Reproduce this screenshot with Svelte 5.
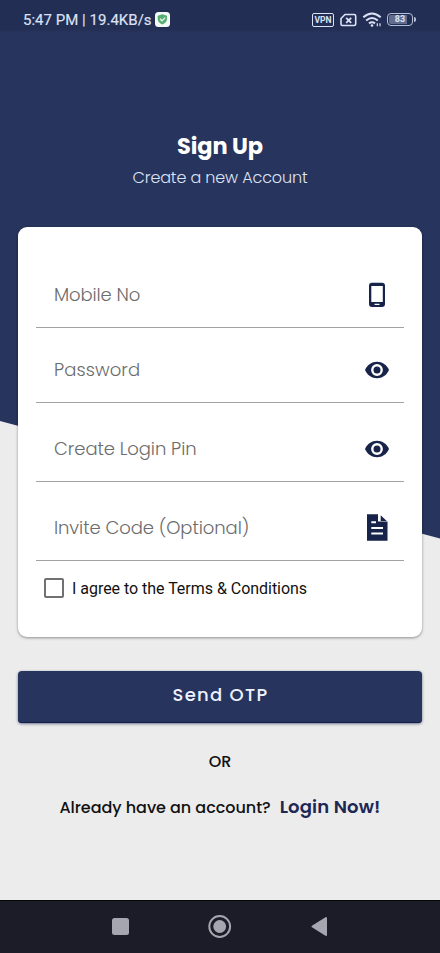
<script>
  const fields = [
    { label: 'Mobile No', icon: 'phone', height: 101, top: 42, spacing: -0.1 },
    { label: 'Password', icon: 'eye', height: 75, top: 16, spacing: 0.08 },
    { label: 'Create Login Pin', icon: 'eye', height: 79, top: 20, spacing: -0.07 },
    { label: 'Invite Code (Optional)', icon: 'file', height: 79, top: 20, spacing: -0.08 }
  ];
</script>

<div class="screen">
  <svg class="backdrop" width="440" height="545" viewBox="0 0 440 545"><path d="M0 0H440V538.5L0 421Z" fill="#27345d" /></svg>
  <header class="status">
    <span class="clock">5:47 PM | 19.4KB/s</span>
    <svg class="shield" width="15" height="15" viewBox="0 0 15 15"><rect width="15" height="15" rx="3.5" fill="#f4faf8" /><path d="M7.3 2.3 12 3.8V7c0 2.6-2 4.4-4.7 5.6C4.6 11.4 2.7 9.6 2.7 7V3.8Z" fill="#55ad70" /><path d="m5 6.8 2 2 3.2-3.2" fill="none" stroke="#e6f5e9" stroke-width="1.3" /></svg>
    <div class="right">
      <span class="vpn">VPN</span>
      <svg width="17" height="14" viewBox="0 0 17 14"><path d="M5 1.5H14.2Q15.7 1.5 15.7 3V11Q15.7 12.5 14.2 12.5H2.3Q1 12.5 1 11V5.5Z" fill="none" stroke="#dce2f5" stroke-width="1.6" /><path d="m6.2 4.8 5 5m0-5L6.2 9.8" stroke="#dce2f5" stroke-width="1.8" /></svg>
      <svg width="21" height="16" viewBox="0 0 21 16" fill="none" stroke="#dce2f5" stroke-width="2"><path d="M1.3 5.3Q10 -2.3 18.7 5.3" /><path d="M4.2 8.5Q10 3.6 15.8 8.5" /><path d="M7 11.4Q10 9 13 11.4" /><circle cx="10" cy="13.5" r="1.3" fill="#dce2f5" stroke="none" /><path d="M15.3 11.3v3M18 11.3v3" stroke-width="1.2" /></svg>
      <div class="battery"><span>83</span></div>
    </div>
  </header>

  <div class="heading">
    <h1>Sign Up</h1>
    <p>Create a new Account</p>
  </div>

  <main class="card">
    {#each fields as field}
      <div class="field" style="height: {field.height}px; padding-top: {field.top}px; letter-spacing: {field.spacing}px">
        <span>{field.label}</span>
        {#if field.icon === 'phone'}
          <svg width="26" height="28" viewBox="0 0 26 28"><path fill-rule="evenodd" d="M8 1.7H18Q21 1.7 21 4.7V23Q21 26 18 26H8Q5 26 5 23V4.7Q5 1.7 8 1.7ZM7.3 5V21H18.8V5ZM10.5 22.7V24H15.5V22.7Z" fill="#172349" /></svg>
        {:else if field.icon === 'eye'}
          <svg width="26" height="28" viewBox="0 0 26 28"><path d="M1 14C3.3 8.8 7.8 5.8 13 5.8S22.7 8.8 25 14C22.7 19.2 18.2 22.2 13 22.2S3.3 19.2 1 14Z" fill="#172349" /><circle cx="13" cy="14" r="4.7" fill="#172349" stroke="#fff" stroke-width="2.4" /></svg>
        {:else}
          <svg width="26" height="28" viewBox="0 0 26 28"><path d="M3 .2H14V7.5H23.5V26.8H3Z" fill="#172349" /><path d="M16.7 1.3 22.7 7H16.7Z" fill="#172349" /><path d="M7.3 8.2H12M7.3 13.9H19M7.3 19.4H19" stroke="#fff" stroke-width="2" /></svg>
        {/if}
      </div>
    {/each}
    <label class="agree"><span class="box"></span><span>I agree to the Terms &amp; Conditions</span></label>
  </main>

  <button>Send OTP</button>
  <p class="or">OR</p>
  <p class="login"><span>Already have an account?</span><strong>Login Now!</strong></p>

  <nav>
    <svg width="440" height="53" viewBox="0 0 440 53"><rect x="112" y="18" width="17" height="17" rx="2.5" fill="#a5a6b0" /><circle cx="219.7" cy="26.5" r="10.4" fill="none" stroke="#a5a6b0" stroke-width="2" /><circle cx="219.7" cy="26.5" r="6.4" fill="#a5a6b0" /><path d="M312.5 26.5 326 18V35Z" fill="#a5a6b0" stroke="#a5a6b0" stroke-linejoin="round" stroke-width="2" /></svg>
  </nav>
</div>

<style>
  :global(body) { margin: 0; }
  .screen { position: relative; width: 440px; height: 953px; background: #ececec; overflow: hidden; font-family: Poppins, Inter, sans-serif; display: flex; flex-direction: column; }
  .backdrop { position: absolute; top: 0; left: 0; z-index: 0; }
  .status, .heading, .card, button, .or, .login, nav { position: relative; z-index: 1; }
  .status { height: 39px; flex: none; display: flex; align-items: center; box-sizing: border-box; padding: 0 27px 0 23px; background: linear-gradient(#232e54 0 29px, #27345d 33px); color: #dce2f5; font-family: Roboto, sans-serif; }
  .clock { width: 132px; font-size: 15px; line-height: 20px; letter-spacing: .02px; white-space: nowrap; padding-top: 1px; -webkit-text-stroke: .15px #dce2f5; }
  .status svg { display: block; }
  .right { margin-left: auto; display: flex; align-items: center; }
  .right > svg:nth-child(2) { margin-left: 6px; }
  .right > svg:nth-child(3) { margin-left: 5px; }
  .vpn { box-sizing: border-box; width: 22px; height: 14px; border: 1.5px solid #dce2f5; border-radius: 2px; font-size: 8.5px; font-weight: 700; line-height: 12px; text-align: center; }
  .battery { position: relative; box-sizing: border-box; width: 26px; height: 13px; margin-left: 4px; border: 1.5px solid #b6bfd8; border-radius: 4px; padding: 1px; font-size: 9px; line-height: 9px; font-weight: 700; text-align: center; }
  .battery span { display: block; background: linear-gradient(90deg, #626d8e 83%, transparent 83%); border-radius: 2px; }
  .battery::after { content: ''; position: absolute; right: -4px; top: 3px; width: 2px; height: 5px; background: #b6bfd8; border-radius: 0 2px 2px 0; }
  .heading { height: 188px; flex: none; text-align: center; color: #fff; }
  h1 { margin: 91px 0 0; font-size: 22.5px; line-height: 32px; font-weight: 700; letter-spacing: -.15px; }
  .heading p { margin: 4px 0 0; color: #dee4f5; font-size: 16px; font-weight: 300; line-height: 24px; letter-spacing: -.15px; }
  .card { box-sizing: border-box; margin: 0 18px; height: 410px; flex: none; padding: 0 18px; background: #fff; border-radius: 9px; box-shadow: 0 1px 3px #0006; }
  .field { box-sizing: border-box; display: flex; justify-content: space-between; align-items: center; padding: 0 14px 6px 18px; border-bottom: 1.5px solid #a2a2a2; color: #6c6c6c; font-size: 18px; font-weight: 300; }
  .field > span { padding-bottom: 2px; }
  .field svg { display: block; flex: none; }
  .agree { display: flex; align-items: center; height: 54px; padding-left: 8px; font: 16px/20px Roboto, sans-serif; letter-spacing: -.03px; color: #111; }
  .agree span:last-child { padding-top: 2px; }
  .box { box-sizing: border-box; width: 20px; height: 20px; margin-right: 8px; border: 2px solid #717171; border-radius: 2px; }
  button { flex: none; margin: 34px 18px 0; height: 52px; border: 0; border-radius: 4px; padding: 0 0 4px 1px; background: #27345d; color: #eef2ff; font: 500 18px/26px Poppins, Inter, sans-serif; letter-spacing: 1.3px; box-shadow: 0 1px 3px #17234999, inset 0 -1px #14204b; }
  .or { margin: 27px 0 0; text-align: center; font-size: 16px; line-height: 24px; font-weight: 500; letter-spacing: -.1px; color: #111; }
  .login { display: flex; justify-content: center; align-items: baseline; gap: 9px; margin: 20px 0 0; line-height: 26px; font-size: 16px; font-weight: 500; letter-spacing: -.03px; color: #111; }
  .login strong { font-size: 18px; font-weight: 600; letter-spacing: .15px; color: #1d2855; }
  nav { height: 53px; margin-top: auto; background: #1b1c28; box-shadow: inset 0 1px #05050a; }
  nav svg { display: block; }
</style>
